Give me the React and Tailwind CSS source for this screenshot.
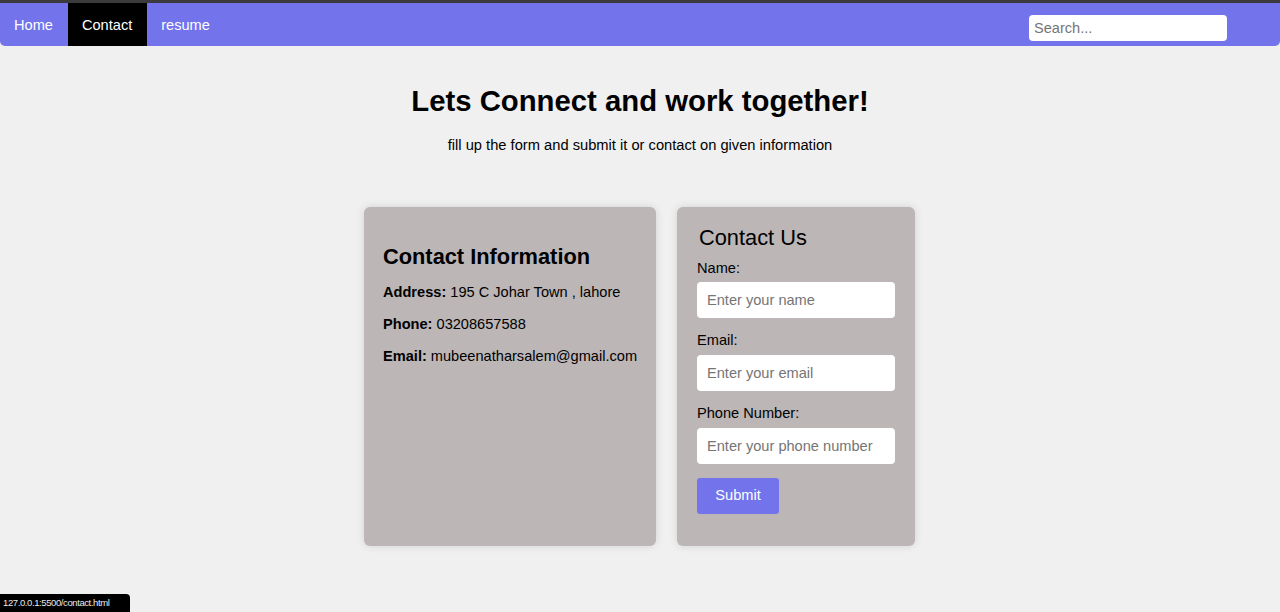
export default function App() {
  const font = { fontFamily: '"Liberation Sans", Arial, sans-serif' }

  return (
    <div className="relative min-h-[612px] bg-[#f0f0f0] text-black" style={font}>
      <div className="h-[3px] bg-[#3b3b3d]" />
      <nav className="h-[43px] bg-[#7373ec] rounded-b-[5px] flex items-stretch justify-between">
        <div className="flex items-stretch text-[14.6px] text-white pl-[1px]">
          <a className="flex items-center pt-[2px] pl-[13px] pr-[15px]">Home</a>
          <a className="flex items-center pt-[2px] pl-[14px] pr-[15px] bg-black">Contact</a>
          <a className="flex items-center pt-[2px] pl-[14px] pr-[15px]">resume</a>
        </div>
        <div className="flex items-start pt-[12px] pr-[53px]">
          <input
            placeholder="Search..."
            className="w-[198px] h-[26px] rounded-[4px] bg-white px-[5px] text-[14.6px] placeholder:text-[#757575] outline-none"
          />
        </div>
      </nav>

      <div className="flex flex-col items-center">
        <h1 className="mt-[38px] text-[29.3px] font-bold leading-[34px]">Lets Connect and work together!</h1>
        <p className="mt-[19px] text-[14.7px] leading-[17px]">fill up the form and submit it or contact on given information</p>

        <div className="mt-[53px] flex items-stretch gap-[21px] pr-[1px]">
          <div className="w-[292px] bg-[#bcb6b6] rounded-[6px] shadow-[0_0_8px_rgba(0,0,0,0.12)] px-[19px] pt-[37px]">
            <h2 className="text-[21.8px] font-bold leading-[25px]">Contact Information</h2>
            <div className="mt-[15px] flex flex-col gap-[15px] text-[14.6px] leading-[17px] whitespace-nowrap">
              <p><b>Address:</b> 195 C Johar Town , lahore</p>
              <p><b>Phone:</b> 03208657588</p>
              <p><b>Email:</b> mubeenatharsalem@gmail.com</p>
            </div>
          </div>

          <div className="w-[238px] bg-[#bcb6b6] rounded-[6px] shadow-[0_0_8px_rgba(0,0,0,0.12)] px-[20px] pt-[18px] pb-[32px]">
            <h2 className="pl-[2px] text-[21.8px] leading-[25px]">Contact Us</h2>
            <div className="mt-[10px] flex flex-col text-[14.6px]">
              <label className="leading-[17px]">Name:</label>
              <input
                placeholder="Enter your name"
                className="mt-[5px] h-[36px] w-[198px] rounded-[4px] bg-white px-[10px] text-[14.6px] placeholder:text-[#757575] outline-none"
              />
              <label className="mt-[14px] leading-[17px]">Email:</label>
              <input
                placeholder="Enter your email"
                className="mt-[6px] h-[36px] w-[198px] rounded-[4px] bg-white px-[10px] text-[14.6px] placeholder:text-[#757575] outline-none"
              />
              <label className="mt-[14px] leading-[17px]">Phone Number:</label>
              <input
                placeholder="Enter your phone number"
                className="mt-[6px] h-[36px] w-[198px] rounded-[4px] bg-white px-[10px] text-[14.6px] placeholder:text-[#757575] outline-none"
              />
              <button className="mt-[14px] h-[36px] w-[82px] rounded-[3px] bg-[#7373ec] text-white text-[14.6px]">
                Submit
              </button>
            </div>
          </div>
        </div>
      </div>

      <div className="absolute left-0 bottom-0 h-[18px] w-[130px] bg-black rounded-tr-[4px] flex items-center pl-[3px] text-[9.5px] text-[#e8e8e8] whitespace-nowrap overflow-hidden" style={{ letterSpacing: '-0.4px' }}>
        127.0.0.1:5500/contact.html
      </div>
    </div>
  )
}
